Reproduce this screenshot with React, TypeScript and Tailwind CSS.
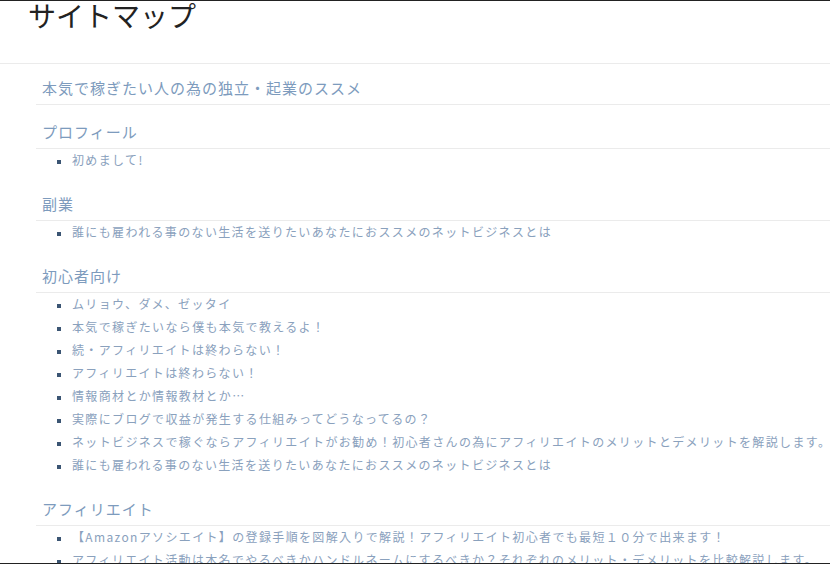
const sections: { title: string; items: string[] }[] = [
  { title: "本気で稼ぎたい人の為の独立・起業のススメ", items: [] },
  { title: "プロフィール", items: ["初めまして!"] },
  {
    title: "副業",
    items: ["誰にも雇われる事のない生活を送りたいあなたにおススメのネットビジネスとは"],
  },
  {
    title: "初心者向け",
    items: [
      "ムリョウ、ダメ、ゼッタイ",
      "本気で稼ぎたいなら僕も本気で教えるよ！",
      "続・アフィリエイトは終わらない！",
      "アフィリエイトは終わらない！",
      "情報商材とか情報教材とか…",
      "実際にブログで収益が発生する仕組みってどうなってるの？",
      "ネットビジネスで稼ぐならアフィリエイトがお勧め！初心者さんの為にアフィリエイトのメリットとデメリットを解説します。",
      "誰にも雇われる事のない生活を送りたいあなたにおススメのネットビジネスとは",
    ],
  },
  {
    title: "アフィリエイト",
    items: [
      "【Amazonアソシエイト】の登録手順を図解入りで解説！アフィリエイト初心者でも最短１０分で出来ます！",
      "アフィリエイト活動は本名でやるべきかハンドルネームにするべきか？それぞれのメリット・デメリットを比較解説します。",
    ],
  },
];

export default function App() {
  return (
    <div
      className="h-[564px] w-[830px] overflow-hidden border-y border-[#222] bg-white"
      style={{ fontFamily: '"Noto Sans CJK JP", "Noto Sans", sans-serif' }}
    >
      <header className="h-[63px] border-b border-[#ebebeb]">
        <h1 className="pl-[28px] text-[28px] leading-[28px] text-[#222]">サイトマップ</h1>
      </header>
      <main className="ml-[36px]">
        {sections.map((s, i) => (
          <section key={i} className={i === 0 ? "" : "mt-[3px]"}>
            <h2 className="border-b border-[#ebebeb] pb-[4px] pl-[6px] pt-[12px] text-[15px] leading-6 tracking-[1px] text-[#7d9bbd]">
              {s.title}
            </h2>
            {s.items.length > 0 && (
              <ul className="pb-[5px]">
                {s.items.map((t, j) => (
                  <li key={j} className="flex h-[23px] items-center whitespace-nowrap">
                    <span className="ml-[21px] mr-[11px] mt-[3px] h-[4px] w-[4px] shrink-0 bg-[#3b5573]" />
                    <span className="-mt-[1px] text-[12px] tracking-[1.35px] text-[#8aa1bd]">{t}</span>
                  </li>
                ))}
              </ul>
            )}
          </section>
        ))}
      </main>
    </div>
  );
}
